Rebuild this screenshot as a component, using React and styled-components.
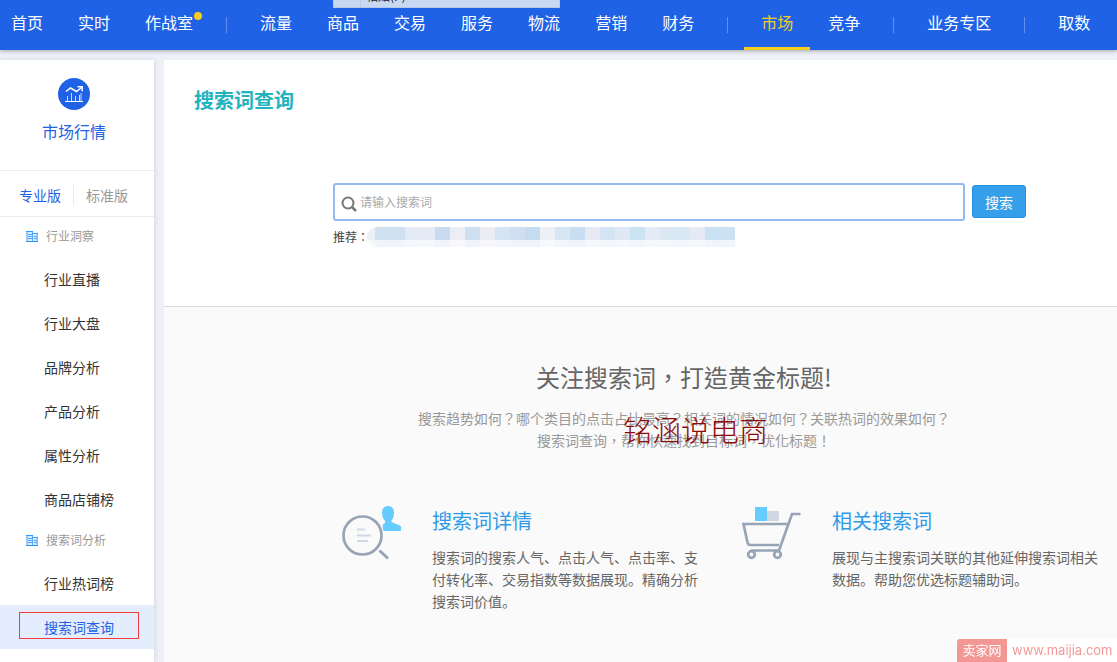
import React from 'react';
import styled, { createGlobalStyle } from 'styled-components';

const GlobalStyle = createGlobalStyle`
  * {
    box-sizing: border-box;
  }

  body {
    margin: 0;
    background: #edf0f6;
    color: #333;
    font-family: "Noto Sans CJK SC", sans-serif;
    font-size: 14px;
  }

  h1, h2, h3, p, ul {
    margin: 0;
    padding: 0;
    font-weight: 400;
  }

  a {
    color: inherit;
    text-decoration: none;
  }

  button, input {
    font-family: inherit;
  }
`;

const Shell = styled.div`
  position: relative;
  display: flex;
  flex-direction: column;
  min-height: 100vh;
  overflow: hidden;
`;

const TopNav = styled.nav`
  position: relative;
  display: flex;
  align-items: center;
  gap: 1px;
  height: 50px;
  background: #1f62e6;
  box-shadow: 0 1px 4px rgba(0, 0, 0, 0.3);
  white-space: nowrap;
`;

const NavLink = styled.a`
  position: relative;
  flex: none;
  height: 50px;
  padding: 0 17px;
  border-bottom: 3px solid ${props => (props.$active ? '#f7ce1f' : 'transparent')};
  color: ${props => (props.$active ? '#f7ce1f' : '#fff')};
  font-size: 16px;
  line-height: 45px;

  &:first-child {
    padding-left: 11px;
  }
`;

const NavDot = styled.span`
  position: absolute;
  top: 12px;
  right: 8px;
  width: 8px;
  height: 8px;
  border-radius: 50%;
  background: #f7ce1f;
`;

const NavDivider = styled.span`
  flex: none;
  width: 1px;
  height: 16px;
  margin: 0 15px;
  background: #5f90f0;
`;

const PasteMenu = styled.div`
  position: absolute;
  top: 0;
  left: 333px;
  width: 227px;
  height: 8px;
  padding-left: 32px;
  border: 1px solid #b4c8ea;
  border-top: 0;
  background: linear-gradient(90deg, #c8d7f0 26px, #b4c8ea 26px, #b4c8ea 27px, #c8d8f3 27px);
  color: #222;
  font-size: 12px;
  overflow: hidden;

  span {
    display: block;
    margin-top: -10px;
    line-height: 12px;
  }
`;

const Body = styled.div`
  display: flex;
  flex: 1;
  gap: 10px;
  padding-top: 10px;
`;

const Sidebar = styled.aside`
  flex: none;
  width: 154px;
  background: #fff;
  box-shadow: 1px 0 4px rgba(0, 0, 0, 0.1);
`;

const SideHead = styled.div`
  display: flex;
  flex-direction: column;
  align-items: center;
  gap: 9px;
  height: 111px;
  padding: 18px 6px 0 0;
  border-bottom: 1px solid #ebebeb;
  color: #1f62e6;
  font-size: 16px;
  line-height: 24px;
`;

const Versions = styled.div`
  display: flex;
  align-items: center;
  height: 46px;
  padding: 2px 0 0 19px;
  border-bottom: 1px solid #ebebeb;
`;

const VersionButton = styled.button`
  padding: 0 12px 0 0;
  border: 0;
  background: none;
  color: ${props => (props.$active ? '#1f62e6' : '#999')};
  font-size: 14px;
  line-height: 20px;

  & + & {
    padding: 0 0 0 12px;
    border-left: 1px solid #ebebeb;
  }
`;

const GroupTitle = styled.h3`
  display: flex;
  align-items: center;
  gap: 8px;
  height: 40px;
  padding: 0 0 2px 26px;
  color: #999;
  font-size: 12px;
  line-height: 38px;
`;

const SideList = styled.ul`
  list-style: none;
`;

const SideLink = styled.a`
  display: flex;
  align-items: center;
  height: 44px;
  padding: 0 15px 3px 19px;
  background: ${props => (props.$active ? '#e3edfd' : 'transparent')};
  color: ${props => (props.$active ? '#1f62e6' : '#333')};

  span {
    flex: 1;
    height: 27px;
    padding-left: 24px;
    border: 1px solid ${props => (props.$active ? '#f23c3c' : 'transparent')};
    line-height: 28px;
  }
`;

// content column keeps its full width and is cut off on narrow windows
const Main = styled.main`
  flex: 1 0 1040px;
  display: flex;
  flex-direction: column;
  background: #fafafa;
`;

const SearchPanel = styled.section`
  height: 247px;
  padding: 25px 30px 0;
  border-bottom: 1px solid #d9d9d9;
  background: #fff;
`;

const PageTitle = styled.h1`
  color: #22b3bf;
  font-size: 20px;
  font-weight: 700;
  line-height: 30px;
`;

const SearchArea = styled.div`
  width: 702px;
  margin: 68px auto 0;
`;

const SearchForm = styled.form`
  display: flex;
  align-items: flex-start;
  gap: 7px;
`;

const SearchBox = styled.label`
  display: flex;
  align-items: center;
  gap: 3px;
  width: 632px;
  height: 38px;
  padding: 0 6px;
  border: 2px solid #97b9f3;
  border-radius: 3px;
  background: #fff;

  svg {
    flex: none;
    margin-top: 4px;
  }
`;

const SearchInput = styled.input`
  flex: 1;
  padding: 0;
  border: 0;
  outline: 0;
  background: none;
  font-size: 12px;
  line-height: 20px;

  &::placeholder {
    color: #aaa;
  }
`;

const SearchButton = styled.button`
  width: 54px;
  height: 33px;
  margin-top: 2px;
  padding: 0;
  border: 1px solid #2391dd;
  border-radius: 3px;
  background: #359fe9;
  color: #fff;
  font-size: 14px;
  line-height: 28px;
`;

const Recommend = styled.div`
  display: flex;
  align-items: center;
  height: 20px;
  margin-top: 6px;
  color: #444;
  font-family: "Noto Sans CJK TC", sans-serif;
  font-size: 12px;
  line-height: 20px;

  span {
    width: 34px;
    white-space: nowrap;
  }
`;

const Mosaic = styled.div`
  display: flex;
  height: 20px;
  border-radius: 10px 0 0 10px;
  overflow: hidden;
`;

const MosaicCell = styled.i`
  width: ${props => props.$width}px;
  background: linear-gradient(rgba(255, 255, 255, 0) 13px, rgba(252, 252, 254, 0.75) 13px) ${props => props.$color};
`;

// the TC face sets commas and question marks in the middle of their box
const Intro = styled.section`
  position: relative;
  padding: 52px 0 24px;
`;

const IntroTitle = styled.h2`
  color: #666;
  font-family: "Noto Sans CJK TC", sans-serif;
  font-size: 24px;
  line-height: 36px;
  text-align: center;
`;

const IntroText = styled.p`
  margin-top: 12px;
  color: #999;
  font-family: "Noto Sans CJK TC", sans-serif;
  line-height: 22px;
  text-align: center;
`;

const Watermark = styled.span`
  position: absolute;
  top: 102px;
  left: 459px;
  color: #8b0a0a;
  font-size: 29px;
  font-weight: 300;
  line-height: 40px;
  white-space: nowrap;
`;

const Features = styled.div`
  display: flex;
  gap: 40px;
  margin: 54px 0 0 178px;
`;

const Feature = styled.article`
  display: flex;
  gap: 30px;
  width: 360px;

  svg {
    flex: none;
  }
`;

const FeatureTitle = styled.h3`
  color: #2f9be8;
  font-size: 20px;
  line-height: 32px;
`;

const FeatureText = styled.p`
  margin-top: 9px;
  color: #666;
  line-height: 22px;
`;

const SiteMark = styled.a`
  position: fixed;
  right: 0;
  bottom: 0;
  display: flex;
  width: 160px;
  height: 23px;
  border-radius: 3px 0 0 0;
  background: #fff;
  color: #f29a98;
  font-family: Inter, Arial, sans-serif;
  font-size: 13px;
  line-height: 22px;
  overflow: hidden;

  b {
    width: 50px;
    margin-right: 5px;
    background: #f39795;
    color: #fff;
    font-family: "Noto Sans CJK SC", sans-serif;
    font-weight: 400;
    text-align: center;
  }
`;

const MarketIcon = () => (
  <svg width="32" height="32" viewBox="0 0 32 32" fill="none" stroke="#fff">
    <circle cx="16" cy="16" r="16" fill="#1f62e6" stroke="none" />
    <path d="M7 23.5h18" />
    <path d="M9.500 23v-5M13.500 23v-8M17.500 23v-5M21.500 23v-6M23 23v-8" stroke="#c9dafb" />
    <path d="M8 13.500l4.500-3.500 6 3.500 5-4" strokeWidth="1.500" />
    <path d="M19.500 8.800h4.700v4.500" strokeWidth="1.500" />
  </svg>
);

const BuildingIcon = () => (
  <svg width="12" height="12" viewBox="0 0 12 12" fill="none" stroke="#2f94f5">
    <path d="M.5 1h6v10h-6zM6.500 3h5v8h-5z" fill="#d9ebfd" stroke="none" />
    <path d="M0 11.500h12M0 1.500h7" />
    <path d="M1 1v10M6.500 1v10M11.200 3v8M7 3.500h5" strokeOpacity="0.8" />
    <path d="M2 4.500h4M2 6.500h4M2 8.500h4M8 6.500h3M8 8.500h3" strokeOpacity="0.8" />
  </svg>
);

const SearchIcon = () => (
  <svg width="16" height="16" viewBox="0 0 16 16" fill="none" stroke="#777">
    <circle cx="7" cy="7" r="5.500" strokeWidth="2" />
    <path d="M11 11l4 4" strokeWidth="2.500" />
  </svg>
);

const DetailIcon = () => (
  <svg width="60" height="56" viewBox="0 0 60 56" fill="none">
    <path
      d="M46 1c-3.500 0-6 2.500-6 6.500 0 4 1.300 6.500 3 8.300v2.200l-2.300 1.500V26H59v-4.500c-.5-1.500-7.500-3.300-9.500-4.500v-1.500c1.600-1.800 2.500-4.500 2.500-8C52 3.500 49.500 1 46 1z"
      fill="#66ccff"
    />
    <circle cx="20.500" cy="30.500" r="21.500" fill="#fafafa" />
    <circle cx="20.500" cy="30.500" r="19" stroke="#98a4b5" strokeWidth="2.700" />
    <path d="M15 24.500h8M15 30.500h14M15 36h11" stroke="#d0d8e4" strokeWidth="2" />
    <path d="M37.500 45.500l8.500 8" stroke="#98a4b5" strokeWidth="3" />
  </svg>
);

const CartIcon = () => (
  <svg width="60" height="56" viewBox="0 0 60 56" fill="none">
    <path d="M13 2h12v14H13z" fill="#66ccff" />
    <path d="M25 6h12v10H25z" fill="#d0d7e2" />
    <g stroke="#98a4b5" strokeWidth="2.700">
      <path d="M46 19H1.500l4 18.500q.6 2.500 3 2.500H37M58.500 9H50L37 45.500H9" />
      <circle cx="9.500" cy="49.500" r="3.300" />
      <circle cx="35.500" cy="49.500" r="3.300" />
    </g>
  </svg>
);

const navGroups = [
  ['首页', '实时', '作战室'],
  ['流量', '商品', '交易', '服务', '物流', '营销', '财务'],
  ['市场', '竞争'],
  ['业务专区'],
  ['取数'],
];

const sideGroups = [
  {
    title: '行业洞察',
    items: ['行业直播', '行业大盘', '品牌分析', '产品分析', '属性分析', '商品店铺榜'],
  },
  {
    title: '搜索词分析',
    items: ['行业热词榜', '搜索词查询'],
  },
];

const mosaicColors = [
  '#d0e1f2', '#d0e1f2', '#e3eaf6', '#e5ebf4', '#c9dbf0', '#edeef4', '#cfdff0', '#ebecf4',
  '#d6e3f3', '#d0dff0', '#c5dbef', '#edf1f6', '#d6e6f5', '#c9dff1', '#e7eaf3', '#d3e4f5',
  '#e0e8f5', '#cce3f2', '#e5ebf4', '#dbe8f4', '#d8e8f6', '#e6eaf4', '#c9e1f2', '#cce2f3',
];

const App = () => (
  <Shell>
    <GlobalStyle />
    <TopNav>
      {navGroups.map((group, index) => (
        <React.Fragment key={group[0]}>
          {index > 0 && <NavDivider />}
          {group.map(name => (
            <NavLink key={name} href="#" $active={name === '市场'}>
              {name}
              {name === '作战室' && <NavDot />}
            </NavLink>
          ))}
        </React.Fragment>
      ))}
      <PasteMenu><span>粘贴(P)</span></PasteMenu>
    </TopNav>

    <Body>
      <Sidebar>
        <SideHead>
          <MarketIcon />
          市场行情
        </SideHead>
        <Versions>
          <VersionButton type="button" $active>专业版</VersionButton>
          <VersionButton type="button">标准版</VersionButton>
        </Versions>
        {sideGroups.map(group => (
          <React.Fragment key={group.title}>
            <GroupTitle>
              <BuildingIcon />
              {group.title}
            </GroupTitle>
            <SideList>
              {group.items.map(item => (
                <li key={item}>
                  <SideLink href="#" $active={item === '搜索词查询'}>
                    <span>{item}</span>
                  </SideLink>
                </li>
              ))}
            </SideList>
          </React.Fragment>
        ))}
      </Sidebar>

      <Main>
        <SearchPanel>
          <PageTitle>搜索词查询</PageTitle>
          <SearchArea>
            <SearchForm onSubmit={event => event.preventDefault()}>
              <SearchBox htmlFor="keyword">
                <SearchIcon />
                <SearchInput id="keyword" type="text" placeholder="请输入搜索词" />
              </SearchBox>
              <SearchButton type="submit">搜索</SearchButton>
            </SearchForm>
            <Recommend>
              <span>推荐：</span>
              <Mosaic>
                <MosaicCell $width={8} $color="#eaf0f6" />
                {mosaicColors.map((color, index) => (
                  <MosaicCell key={index} $width={15} $color={color} />
                ))}
              </Mosaic>
            </Recommend>
          </SearchArea>
        </SearchPanel>

        <Intro>
          <IntroTitle>关注搜索词，打造黄金标题!</IntroTitle>
          <IntroText>
            搜索趋势如何？哪个类目的点击占比最高？相关词的情况如何？关联热词的效果如何？
            <br />
            搜索词查询，帮你快速找到目标词，优化标题！
          </IntroText>
          <Watermark>铭涵说电商</Watermark>
          <Features>
            <Feature>
              <DetailIcon />
              <div>
                <FeatureTitle>搜索词详情</FeatureTitle>
                <FeatureText>搜索词的搜索人气、点击人气、点击率、支付转化率、交易指数等数据展现。精确分析搜索词价值。</FeatureText>
              </div>
            </Feature>
            <Feature>
              <CartIcon />
              <div>
                <FeatureTitle>相关搜索词</FeatureTitle>
                <FeatureText>展现与主搜索词关联的其他延伸搜索词相关数据。帮助您优选标题辅助词。</FeatureText>
              </div>
            </Feature>
          </Features>
        </Intro>
      </Main>
    </Body>

    <SiteMark href="#"><b>卖家网</b>www.maijia.com</SiteMark>
  </Shell>
);

export default App;
